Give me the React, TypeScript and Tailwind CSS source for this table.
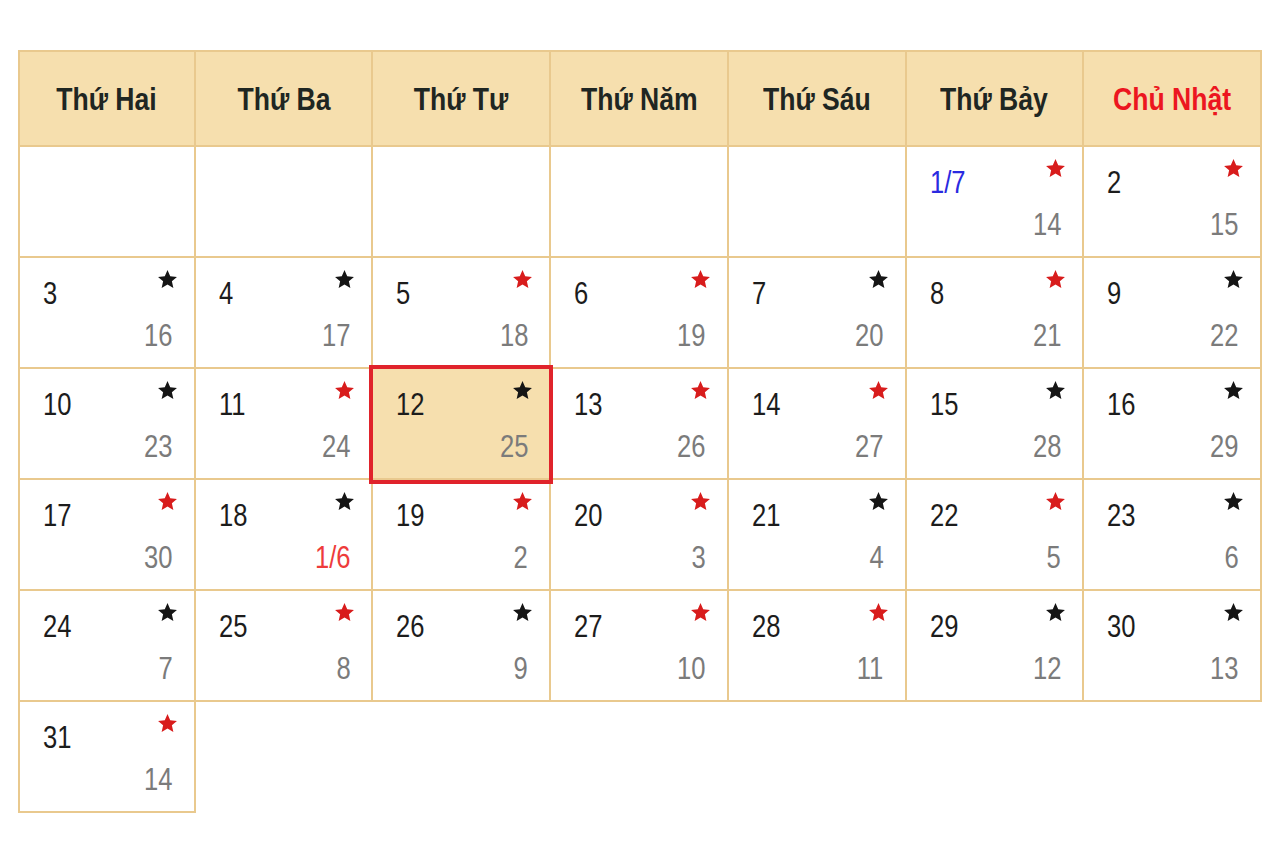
import React from 'react';

type Day = { d: string; l: string; red: boolean; dayBlue?: boolean; lunarRed?: boolean; today?: boolean } | null;

const headers = ['Thứ Hai', 'Thứ Ba', 'Thứ Tư', 'Thứ Năm', 'Thứ Sáu', 'Thứ Bảy', 'Chủ Nhật'];

const s = (d: string, l: string, red: boolean, extra: Partial<NonNullable<Day>> = {}): Day => ({ d, l, red, ...extra });

const weeks: Day[][] = [
  [null, null, null, null, null, s('1/7', '14', true, { dayBlue: true }), s('2', '15', true)],
  [s('3', '16', false), s('4', '17', false), s('5', '18', true), s('6', '19', true), s('7', '20', false), s('8', '21', true), s('9', '22', false)],
  [s('10', '23', false), s('11', '24', true), s('12', '25', false, { today: true }), s('13', '26', true), s('14', '27', true), s('15', '28', false), s('16', '29', false)],
  [s('17', '30', true), s('18', '1/6', false, { lunarRed: true }), s('19', '2', true), s('20', '3', true), s('21', '4', false), s('22', '5', true), s('23', '6', false)],
  [s('24', '7', false), s('25', '8', true), s('26', '9', false), s('27', '10', true), s('28', '11', true), s('29', '12', false), s('30', '13', false)],
  [s('31', '14', true)],
];

function Star({ red }: { red: boolean }) {
  return (
    <svg width="21" height="21" viewBox="0 0 24 24" className={red ? 'fill-[#d81c1c]' : 'fill-[#151515]'}>
      <polygon points="12,1 15.1,8.3 22.8,9 17,14.1 18.7,21.8 12,17.8 5.3,21.8 7,14.1 1.2,9 8.9,8.3" />
    </svg>
  );
}

function Cell({ day, first }: { day: Day; first: boolean }) {
  const base = 'h-[111px] border-r-2 border-b-2 border-[#e9c98e] ' + (first ? 'border-l-2 ' : '');
  if (!day) return <div className={base + 'bg-white'} />;
  return (
    <div className={base + 'relative pl-[23px] pr-[16px] pt-[11px] ' + (day.today ? 'bg-[#f6dfae]' : 'bg-white')}>
      {day.today && <div className="absolute -left-[4px] -right-[4px] -top-[4px] -bottom-[6px] z-10 border-4 border-[#e0232b]" />}
      <div className="flex items-start justify-between">
        <span
          className={
            'mt-[6px] inline-block origin-left scale-x-[0.8] text-[32px] leading-[36px] ' +
            (day.dayBlue ? 'text-[#2a2ae0]' : 'text-[#1c1c1c]')
          }
        >
          {day.d}
        </span>
        <Star red={day.red} />
      </div>
      <div className="mt-[6px] flex justify-end pr-[5px]">
        <span
          className={
            'inline-block origin-right scale-x-[0.8] text-[32px] leading-[36px] ' +
            (day.lunarRed ? 'text-[#ee3b3b]' : 'text-[#7b7b7b]')
          }
        >
          {day.l}
        </span>
      </div>
    </div>
  );
}

export default function App() {
  return (
    <div className="min-h-[853px] bg-white pl-[18px] pt-[50px] font-['Liberation_Sans',Arial,sans-serif]">
      <div className="grid w-[1244px] grid-cols-7">
        {headers.map((h, i) => (
          <div
            key={h}
            className={
              'flex h-[97px] items-center justify-center border-t-2 border-r-2 border-b-2 border-[#e9c98e] bg-[#f6dfae] ' +
              (i === 0 ? 'border-l-2' : '')
            }
          >
            <span
              className={
                'inline-block scale-x-[0.83] text-[32px] font-bold ' + (i === 6 ? 'text-[#ec1620]' : 'text-[#1f2622]')
              }
            >
              {h}
            </span>
          </div>
        ))}
        {weeks.map((w, wi) =>
          w.map((day, di) => <Cell key={wi + '-' + di} day={day} first={di === 0} />)
        )}
      </div>
    </div>
  );
}
